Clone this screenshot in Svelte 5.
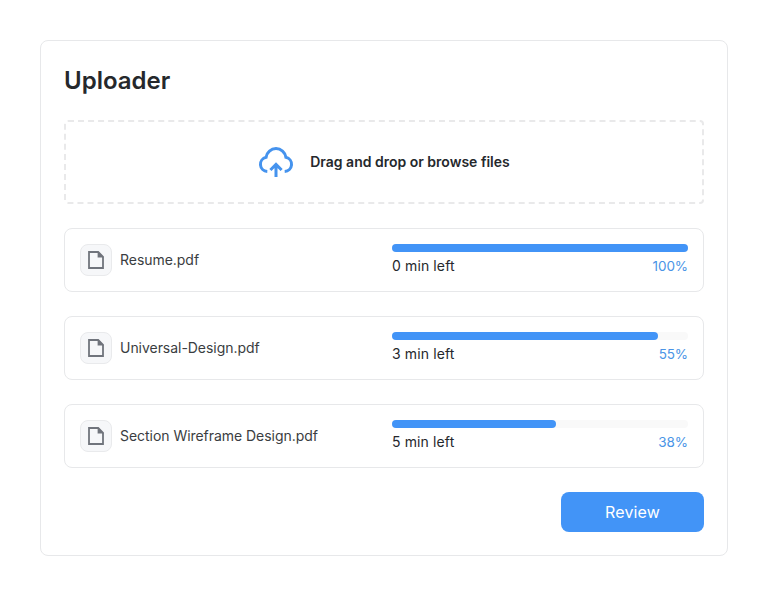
<script>
  const files = [
    { name: 'Resume.pdf', left: '0 min left', percent: '100%', filled: 296 },
    { name: 'Universal-Design.pdf', left: '3 min left', percent: '55%', filled: 266 },
    { name: 'Section Wireframe Design.pdf', left: '5 min left', percent: '38%', filled: 164 }
  ];
</script>

<main class="uploader">
  <h1>Uploader</h1>
  <div class="dropzone">
    <svg class="cloud" width="36" height="32" viewBox="0 0 36 32" fill="none" stroke="#4593ee" stroke-width="3">
      <path d="M9.3 25.6A7.3 7.3 0 0 1 8.1 11.2A10 10 0 0 1 27.9 11.2A7.3 7.3 0 0 1 26.7 25.6" />
      <path d="M18 31V18.5M12.4 24L18 18.4L23.6 24" />
    </svg>
    <span>Drag and drop or browse files</span>
  </div>
  {#each files as file}
    <section class="file">
      <div class="icon">
        <svg width="16" height="18" viewBox="0 0 16 18">
          <path d="M1 1H10.2L15 5.8V17H1Z" fill="none" stroke="#70747c" stroke-width="1.8" />
          <path d="M9.6 1H10.5L15.5 6V6.6H9.6Z" fill="#70747c" />
        </svg>
      </div>
      <span class="name">{file.name}</span>
      <div class="progress">
        <div class="track"><div class="bar" style="width: {file.filled}px"></div></div>
        <div class="meta"><span class="left">{file.left}</span><span class="percent">{file.percent}</span></div>
      </div>
    </section>
  {/each}
  <button>Review</button>
</main>

<style>
  :global(body) { background: #fff; }
  .uploader {
    box-sizing: border-box;
    width: 688px;
    height: 516px;
    margin: 40px;
    padding: 23px;
    border: 1px solid #e7e8ea;
    border-radius: 8px;
    display: flex;
    flex-direction: column;
    gap: 24px;
    font-family: Inter, sans-serif;
    color: #25282c;
  }
  h1 {
    box-sizing: border-box;
    height: 32px;
    margin: 0;
    padding-top: 1px;
    font-size: 24px;
    line-height: 32px;
    font-weight: 600;
  }
  .dropzone {
    box-sizing: border-box;
    height: 84px;
    border: 2px dashed #e9e9ea;
    border-radius: 4px;
    display: flex;
    align-items: center;
    justify-content: center;
    gap: 16px;
    font-size: 14px;
    font-weight: 600;
  }
  .dropzone span { padding-bottom: 2px; }
  .cloud { margin-bottom: 1px; }
  .file {
    box-sizing: border-box;
    height: 64px;
    padding: 15px;
    border: 1px solid #e7e8ea;
    border-radius: 8px;
    display: flex;
    align-items: center;
  }
  .icon {
    box-sizing: border-box;
    width: 32px;
    height: 32px;
    border: 1px solid #e9eaec;
    border-radius: 8px;
    background: #f6f7f9;
    display: flex;
    align-items: center;
    justify-content: center;
  }
  .name {
    margin-left: 8px;
    padding-bottom: 2px;
    flex: 1;
    font-size: 14px;
    letter-spacing: -0.04px;
    color: #3a3d41;
  }
  .progress { width: 296px; }
  .track {
    height: 8px;
    background: #f9f9f9;
    border-radius: 4px;
  }
  .bar {
    height: 8px;
    border-radius: 4px;
    background: #4294f7;
  }
  .meta {
    display: flex;
    justify-content: space-between;
    margin-top: 4px;
    font-size: 14px;
    line-height: 20px;
  }
  .left { letter-spacing: 0.12px; }
  .percent {
    font-size: 13.5px;
    font-weight: 400;
    letter-spacing: -0.1px;
    color: #4a94e6;
  }
  button {
    align-self: flex-end;
    width: 143px;
    height: 40px;
    padding: 0;
    border: 0;
    border-radius: 8px;
    background: #4294f7;
    color: #fff;
    font: 400 16px Inter, sans-serif;
    letter-spacing: 0.15px;
  }
</style>
